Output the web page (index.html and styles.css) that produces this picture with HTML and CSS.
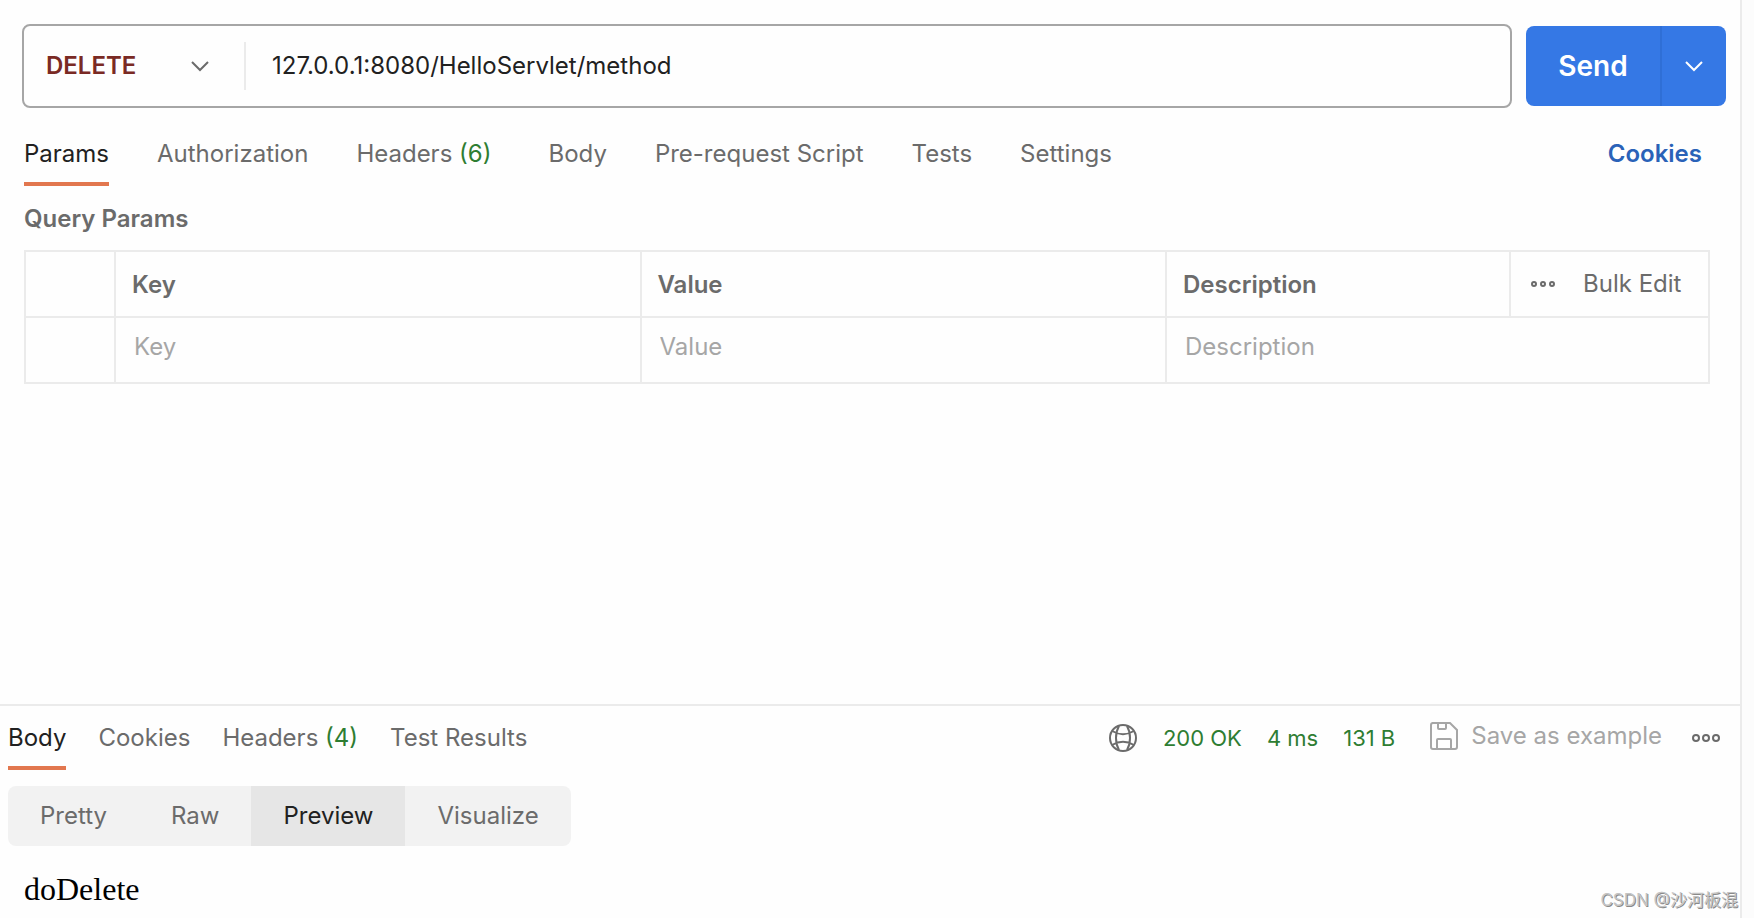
FILE: index.html
```html
<!DOCTYPE html>
<html lang="en">
<head>
    <meta charset="UTF-8">
    <meta name="viewport" content="width=device-width, initial-scale=1.0">
    <title>HelloServlet request</title>
    <link rel="stylesheet" href="styles.css">
</head>
<body>
    <main class="pane">
        <section class="request">
            <form class="url-row">
                <div class="url-box">
                    <div class="method">
                        <select class="method-select" aria-label="Method">
                            <option>GET</option>
                            <option>POST</option>
                            <option>PUT</option>
                            <option selected>DELETE</option>
                        </select>
                        <svg class="chevron" viewBox="0 0 20 12"><path d="M2 2l8 8 8-8"/></svg>
                    </div>
                    <input class="url-input" type="text" aria-label="Request URL" value="127.0.0.1:8080/HelloServlet/method">
                </div>
                <div class="send-group">
                    <button type="button" class="send-btn">Send</button>
                    <button type="button" class="send-more" aria-label="Send options">
                        <svg class="chevron" viewBox="0 0 20 12"><path d="M2 2l8 8 8-8"/></svg>
                    </button>
                </div>
            </form>

            <nav class="tabs">
                <button class="tab active">Params</button>
                <button class="tab">Authorization</button>
                <button class="tab with-count">Headers <span class="count">(6)</span></button>
                <button class="tab">Body</button>
                <button class="tab">Pre-request Script</button>
                <button class="tab">Tests</button>
                <button class="tab">Settings</button>
                <a class="cookies-link" href="#">Cookies</a>
            </nav>

            <h2 class="section-title">Query Params</h2>
            <table class="params">
                <colgroup>
                    <col class="col-check">
                    <col>
                    <col>
                    <col class="col-desc">
                    <col class="col-tools">
                </colgroup>
                <thead>
                    <tr>
                        <th></th>
                        <th>Key</th>
                        <th>Value</th>
                        <th>Description</th>
                        <th class="tools-cell">
                            <div class="tools">
                                <button class="icon-btn" aria-label="Columns">
                                    <svg class="dots small" viewBox="0 0 26 10"><circle cx="5" cy="5" r="2"/><circle cx="14" cy="5" r="2"/><circle cx="23" cy="5" r="2"/></svg>
                                </button>
                                <button class="bulk-btn">Bulk Edit</button>
                            </div>
                        </th>
                    </tr>
                </thead>
                <tbody>
                    <tr>
                        <td></td>
                        <td><input type="text" placeholder="Key" aria-label="Key"></td>
                        <td><input type="text" placeholder="Value" aria-label="Value"></td>
                        <td colspan="2"><input type="text" placeholder="Description" aria-label="Description"></td>
                    </tr>
                </tbody>
            </table>
        </section>

        <section class="response">
            <div class="response-bar">
                <nav class="tabs">
                    <button class="tab active">Body</button>
                    <button class="tab">Cookies</button>
                    <button class="tab">Headers <span class="count">(4)</span></button>
                    <button class="tab">Test Results</button>
                </nav>
                <div class="status">
                    <svg class="globe" viewBox="0 0 30 30">
                        <circle cx="15" cy="15" r="13"/>
                        <path d="M11 3C7 10 7 20 11 27M19 3c4 7 4 17 0 24M4 8c7 4 15 4 22 0M4 22c7-4 15-4 22 0"/>
                    </svg>
                    <span>200 OK</span>
                    <span>4 ms</span>
                    <span>131 B</span>
                </div>
                <button class="save-btn">
                    <svg class="floppy" viewBox="0 0 30 30">
                        <path d="M3 2h18l7 7v17q0 2-2 2H4q-2 0-2-2V4q0-2 2-2zM9 2v5q0 1 1 1h6q1 0 1-1V2M8 28V19q0-1 1-1h12q1 0 1 1v9"/>
                    </svg>
                    Save as example
                </button>
                <button class="icon-btn" aria-label="More">
                    <svg class="dots" viewBox="0 0 32 12"><circle cx="6" cy="6" r="3"/><circle cx="16" cy="6" r="3"/><circle cx="26" cy="6" r="3"/></svg>
                </button>
            </div>

            <div class="view-switch">
                <button>Pretty</button>
                <button>Raw</button>
                <button class="active">Preview</button>
                <button>Visualize</button>
            </div>

            <div class="preview">doDelete</div>
            <div class="watermark">CSDN @沙河板混</div>
        </section>
    </main>
</body>
</html>
```
FILE: styles.css
```css
:root {
    --text: #212121;
    --muted: #6b6b6b;
    --faint: #a6a6a6;
    --line: #ebebeb;
    --green: #2e7d32;
    --orange: #e2774f;
    --blue: #3578e5;
}

* {
    box-sizing: border-box;
}

body {
    margin: 0;
    background: #fcfcfc;
    font-family: Inter, "Noto Sans CJK SC", sans-serif;
    font-size: 24px;
    line-height: 32px;
    color: var(--text);
}

button, input, select {
    font: inherit;
    color: inherit;
    border: 0;
    padding: 0;
    background: none;
}

button {
    cursor: pointer;
}

svg {
    display: block;
    fill: none;
    stroke: currentColor;
    stroke-width: 2;
}

.pane {
    display: flex;
    flex-direction: column;
    min-height: 100vh;
    margin-right: 12px;
    background: #fefefe;
    border-right: 2px solid var(--line);
}

.request {
    flex: 1;
    padding: 24px 14px 0 22px;
}

/* url bar */
.url-row {
    display: flex;
    align-items: center;
    gap: 14px;
}

.url-box {
    flex: 1;
    display: flex;
    align-items: center;
    height: 84px;
    border: 2px solid var(--faint);
    border-radius: 8px;
}

.method {
    position: relative;
    display: flex;
    align-items: center;
    width: 222px;
    height: 48px;
    border-right: 2px solid var(--line);
}

.method-select {
    appearance: none;
    width: 100%;
    padding-left: 22px;
    font-weight: 600;
    color: #7a2a24;
}

.method .chevron {
    position: absolute;
    right: 34px;
    color: var(--muted);
    pointer-events: none;
}

.chevron {
    width: 20px;
    height: 12px;
}

.url-input {
    flex: 1;
    padding: 0 26px;
}

.send-group {
    display: flex;
    height: 80px;
    border-radius: 8px;
    overflow: hidden;
    background: var(--blue);
    color: #ffffff;
}

.send-btn {
    width: 134px;
    font-size: 28px;
    font-weight: 600;
}

.send-more {
    display: flex;
    align-items: center;
    justify-content: center;
    width: 66px;
    border-left: 2px solid #2f6fd6;
}

/* tabs */
.tabs {
    display: flex;
    color: var(--muted);
}

.request .tabs {
    gap: 48px;
    margin: 26px 0 0 2px;
}

.tab {
    padding: 4px 0 12px;
    border-bottom: 4px solid transparent;
    white-space: nowrap;
}

.tab.active {
    color: var(--text);
    border-color: var(--orange);
}

.tab.with-count {
    margin-right: 9px;
}

.count {
    color: var(--green);
}

.cookies-link {
    margin: 4px 24px 0 auto;
    font-weight: 600;
    color: #2a62b8;
    text-decoration: none;
}

/* params table */
.section-title {
    margin: 17px 0 15px 2px;
    font-size: 24px;
    font-weight: 600;
    color: var(--muted);
}

.params {
    width: calc(100% - 18px);
    margin-left: 2px;
    table-layout: fixed;
    border-collapse: collapse;
}

.params th,
.params td {
    height: 66px;
    padding: 0 16px;
    border: 2px solid var(--line);
    text-align: left;
    color: var(--muted);
}

.params th {
    padding-top: 2px;
    font-weight: 600;
}

.params td input {
    display: block;
    width: 100%;
    margin-bottom: 6px;
    padding-left: 2px;
}

.params input::placeholder {
    color: var(--faint);
    opacity: 1;
}

.col-check {
    width: 90px;
}

.col-desc {
    width: 344px;
}

.col-tools {
    width: 199px;
}

.params .tools-cell {
    padding: 0 18px;
}

.tools {
    display: flex;
    align-items: center;
    gap: 28px;
    font-weight: 400;
}

.dots {
    width: 32px;
    height: 12px;
}

.dots.small {
    width: 26px;
    height: 10px;
}

/* response */
.response {
    position: relative;
    height: 214px;
    padding: 0 18px 0 8px;
    border-top: 2px solid var(--line);
}

.response-bar {
    display: flex;
    align-items: center;
    height: 64px;
}

.response .tabs {
    gap: 32px;
    margin-right: auto;
    padding-top: 12px;
}

.status {
    display: flex;
    align-items: center;
    gap: 25px;
    font-size: 22px;
    color: var(--green);
}

.globe {
    width: 30px;
    height: 30px;
    color: var(--muted);
}

.save-btn {
    display: flex;
    align-items: center;
    gap: 12px;
    margin: 0 28px 0 34px;
    padding-bottom: 4px;
    color: var(--faint);
}

.floppy {
    width: 30px;
    height: 30px;
}

.response-bar .icon-btn {
    color: var(--muted);
}

.view-switch {
    display: flex;
    width: fit-content;
    height: 60px;
    margin-top: 16px;
    border-radius: 8px;
    overflow: hidden;
    background: #f2f2f2;
    color: var(--muted);
}

.view-switch button {
    padding: 0 32px;
}

.view-switch .active {
    background: #e6e6e6;
    color: var(--text);
}

.preview {
    padding: 27px 16px 0;
    font-family: "Liberation Serif", serif;
    font-size: 32px;
    color: #000000;
}

.watermark {
    position: absolute;
    right: 2px;
    bottom: 2px;
    font-size: 17px;
    color: #c4c4c4;
    text-shadow: 1px 1px 0 #8a8a8a;
}
```
